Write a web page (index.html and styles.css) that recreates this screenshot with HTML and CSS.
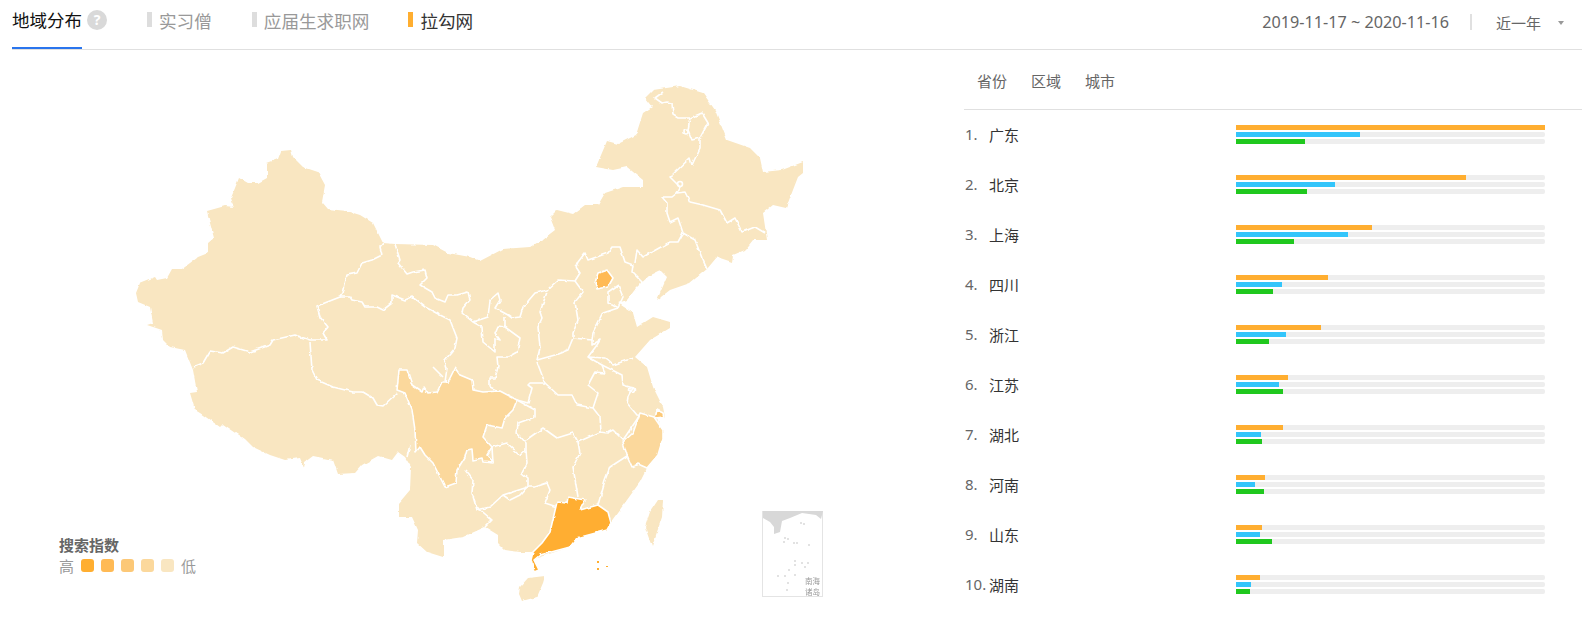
FILE: index.html
```html
<!DOCTYPE html>
<html>

<head>
  <title>地域分布</title>
  <link rel="stylesheet" href="styles.css">
</head>

<body>
  <div class="header">
    <div class="tab-active">地域分布</div>
    <div class="help">?</div>
    <div class="tab tab-1"><i class="mark"></i>实习僧</div>
    <div class="tab tab-2"><i class="mark"></i>应届生求职网</div>
    <div class="tab tab-3"><i class="mark mark-orange"></i>拉勾网</div>
    <div class="range">
      <span class="date">2019-11-17 ~ 2020-11-16</span>
      <i class="sep"></i>
      <span class="period">近一年</span>
      <i class="caret"></i>
    </div>
  </div>

  <div class="kotak">
    <div class="peta">
      <svg class="map" width="964" height="572" viewBox="0 50 964 572">
        <defs>
          <filter id="kasar" filterUnits="userSpaceOnUse" x="100" y="60" width="740" height="550">
            <feTurbulence type="fractalNoise" baseFrequency="0.14" numOctaves="2" seed="4" />
            <feDisplacementMap in="SourceGraphic" scale="3" xChannelSelector="R" yChannelSelector="G" />
          </filter>
          <filter id="kabur" filterUnits="userSpaceOnUse" x="755" y="505" width="75" height="100">
            <feGaussianBlur stdDeviation="0.45" />
          </filter>
        </defs>

        <g filter="url(#kasar)">
          <!-- daratan -->
          <path class="land" d="M136 293L140 283L155 277L157 280L167 278L172 269L182 269L198 257L208 253L208 243L214 238L210 223L207 211L225 206L234 207L231 198L239 178L248 183L258 183L267 178L267 163L278 159L281 151L291 150L293 157L303 167L318 172L325 185L322 202L328 209L347 211L360 215L373 223L383 243L395 244L433 245L448 253L470 257L480 261L503 249L530 247L542 240L555 230L550 217L557 210L573 214L585 205L598 205L605 193L623 187L643 187L643 180L627 167L613 170L596 167L607 141L618 144L636 135L643 113L652 107L645 98L653 90L680 86L703 93L715 110L727 140L750 148L760 158L763 172L782 170L803 162L803 173L798 177L786 208L773 205L763 213L767 240L753 240L745 250L733 255L732 262L717 257L707 269L690 283L670 290L657 300L667 277L660 270L650 275L637 287L627 300L618 303L633 313L637 327L653 317L670 322L670 328L650 340L635 357L647 367L653 387L663 407L665 417L657 418L663 433L658 455L647 468L640 482L627 500L610 523L607 530L577 538L570 547L540 557L533 560L538 570L533 572L531 560L533 552L520 552L505 550L498 543L498 535L485 527L463 537L443 540L443 557L427 552L417 543L418 530L412 517L399 517L399 503L410 490L411 467L405 457L398 452L392 460L378 456L362 465L355 473L338 474L333 460L313 456L305 462L304 468L300 458L285 460L270 455L253 447L245 439L223 424L220 427L200 413L195 410L190 393L197 392L193 370L185 350L170 347L163 340L162 330L147 325L153 323L150 307L138 302Z" />
          <path class="land" d="M520 587L528 578L545 576L543 583L537 597L522 601L519 594Z" />
          <path class="land" d="M663 500L658 500L650 512L645 527L652 547L662 517Z" />

          <!-- batas provinsi -->
          <path class="batas" d="M383 243L380 247L382 255L372 260L362 263L357 273L347 275L343 293L340 297L317 306L320 317L328 327L323 333L327 340L310 340L295 335L273 340L270 345L250 352L233 347L223 353L210 351L203 363L193 367" />
          <path class="batas" d="M395 244L400 260L398 263L407 274L413 272L425 270L427 278L420 285L432 292L435 298L445 302L448 295L457 295L468 292L470 300L463 308L462 313L473 322L488 317L490 300L498 293L500 300L495 308L508 315L512 318L520 317L523 307L535 293L547 290L558 280L575 281L580 273L576 267" />
          <path class="batas" d="M340 297L350 297L352 300L362 302L365 307L377 307L383 310L392 303L392 295L405 300L412 297L425 307L440 315L450 320L457 338L455 348L445 360L447 368L445 382M433 367L443 377" />
          <path class="batas" d="M310 342L312 370L317 380L333 387L353 392L363 392L373 398L377 405L383 406L397 393" />
          <path class="batas" d="M410 445L407 457M465 470L473 480L472 493L477 510L490 507L503 495L510 500L520 495L527 487M477 507L492 520L485 527" />
          <path class="batas" d="M493 463L492 447L507 443L520 455L526 450M517 400L535 410L535 417L518 423L517 433L526 443L526 450L527 463L522 473L528 478L528 487L503 495M528 487L535 487L547 483L550 490L545 503L557 507" />
          <path class="batas" d="M526 440L543 428L557 438L573 433L578 442L580 453L573 467L578 497M578 442L600 432L607 433L613 430L623 440L640 415M598 505L605 480L610 467L627 456" />
          <path class="batas" d="M473 322L482 327L483 342L495 352L495 338L500 340L495 333L498 326L505 327L520 338L517 352L508 357L497 357L498 367L495 378L490 378L490 387L513 398M505 327L505 317" />
          <path class="batas" d="M547 292L540 312L542 318L538 327L540 348L537 360L555 355L568 350L573 338L573 333L578 320L575 302L583 292L575 281M573 338L592 340L593 333L603 313L618 308" />
          <path class="batas" d="M537 362L545 383L530 383L528 385L532 388L528 403L517 400M545 383L558 395L572 395L577 405L593 408L600 417L601 432M593 408L598 393L588 385L595 372L605 373L602 365L588 357L597 345L600 340L592 345L592 340" />
          <path class="batas" d="M588 357L605 358L613 365L633 358M602 365L622 375L623 385L633 388L628 397L627 403L637 415L653 417" />
          <path class="batas" d="M618 308L608 303L608 292L618 285L623 297L618 308M576 267L578 262L585 253L588 260L608 253L612 247L620 247L625 262L633 265L632 272L642 282L635 296M635 263L637 250L643 257L670 242L678 242L683 233" />
          <path class="batas" d="M683 233L695 240L702 258L707 269M683 233L678 218L670 222L667 213L667 203L662 197L672 197L677 193L685 192L690 202L703 205L720 210L727 223L735 218L742 232L755 227L765 233" />
          <path class="batas" d="M677 193L680 187L670 177L690 158L692 165L700 148L700 138L708 123L702 113L690 118L678 118L673 115L672 103L667 102L662 103L655 98L663 92M690 118L688 130L692 140L700 138" />
          <circle class="batas" cx="680" cy="184" r="2.5" />
          <circle class="batas" cx="686" cy="132" r="2" />
          <circle class="batas" cx="632" cy="390" r="2.5" />

          <!-- provinsi berwarna -->
          <path class="prov warna-3" d="M397 390L399 370L407 370L412 385L422 392L424 387L428 393L437 392L442 382L448 382L455 368L460 375L472 380L473 390L483 392L500 391L517 400L513 410L505 418L502 428L487 425L483 437L492 447L487 455L493 463L483 462L482 458L473 460L472 449L467 450L465 457L457 470L456 483L445 487L433 463L425 455L420 447L416 452L415 430L412 410L405 393Z" />
          <path class="prov warna-3" d="M640 413L654 417L663 430L663 438L658 455L647 468L638 464L632 467L627 455L623 442L633 433Z" />
          <path class="prov warna-2" d="M657 410L663 413L664 417L655 418Z" />
          <path class="prov warna-1" d="M595 283L598 273L607 270L613 278L608 287L597 289Z" />
          <path class="prov warna-0" d="M557 502L567 503L568 497L585 500L580 510L598 505L608 512L611 523L607 530L577 538L570 547L540 555L534 560L539 570L534 572L531 560L533 552L542 543L550 532Z" />
        </g>
        <rect class="warna-0" x="597" y="561" width="2" height="2" />
        <rect class="warna-0" x="597" y="568" width="2" height="2" />
        <rect class="warna-0" x="606" y="566" width="2" height="1" />

        <!-- kotak laut china selatan -->
        <g filter="url(#kabur)">
          <rect class="inset" x="762.5" y="511.5" width="60" height="85" />
          <path class="inset-land" d="M763 511H823L821 519L816 515L802 513L790 518L782 521L780 532L774 534L774 527L770 522L763 518Z" />
          <g class="inset-dot">
            <circle cx="801" cy="523" r="1" /><circle cx="804" cy="524" r="1" />
            <circle cx="785" cy="538" r="1" /><circle cx="788" cy="539" r="1" /><circle cx="784" cy="542" r="1" />
            <circle cx="794" cy="543" r="1" /><circle cx="797" cy="543" r="1" /><circle cx="809" cy="545" r="1" />
            <circle cx="795" cy="561" r="1" /><circle cx="795" cy="565" r="1" /><circle cx="802" cy="563" r="1" />
            <circle cx="808" cy="563" r="1" /><circle cx="805" cy="567" r="1" /><circle cx="789" cy="570" r="1" />
            <circle cx="778" cy="576" r="1" /><circle cx="785" cy="576" r="1" /><circle cx="795" cy="575" r="1" />
            <circle cx="788" cy="583" r="1" /><circle cx="787" cy="590" r="1" />
          </g>
          <text class="inset-text" x="805" y="584">南海</text>
          <text class="inset-text" x="805" y="595">诸岛</text>
        </g>
      </svg>

      <div class="legend">
        <div class="legend-title">搜索指数</div>
        <div class="legend-row">
          <span>高</span>
          <i class="swatch warna-bg-0"></i>
          <i class="swatch warna-bg-1"></i>
          <i class="swatch warna-bg-2"></i>
          <i class="swatch warna-bg-3"></i>
          <i class="swatch warna-bg-4"></i>
          <span>低</span>
        </div>
      </div>
    </div>

    <div class="panel">
      <div class="subtabs">
        <span>省份</span>
        <span>区域</span>
        <span>城市</span>
      </div>

      <div class="row">
        <span class="no">1.</span><span class="nama">广东</span>
        <div class="bars">
          <div class="track"><div class="fill orange" style="width:100%"></div></div>
          <div class="track"><div class="fill blue" style="width:40%"></div></div>
          <div class="track"><div class="fill green" style="width:22.3%"></div></div>
        </div>
      </div>
      <div class="row">
        <span class="no">2.</span><span class="nama">北京</span>
        <div class="bars">
          <div class="track"><div class="fill orange" style="width:74.4%"></div></div>
          <div class="track"><div class="fill blue" style="width:32%"></div></div>
          <div class="track"><div class="fill green" style="width:23%"></div></div>
        </div>
      </div>
      <div class="row">
        <span class="no">3.</span><span class="nama">上海</span>
        <div class="bars">
          <div class="track"><div class="fill orange" style="width:44%"></div></div>
          <div class="track"><div class="fill blue" style="width:36.4%"></div></div>
          <div class="track"><div class="fill green" style="width:18.7%"></div></div>
        </div>
      </div>
      <div class="row">
        <span class="no">4.</span><span class="nama">四川</span>
        <div class="bars">
          <div class="track"><div class="fill orange" style="width:29.8%"></div></div>
          <div class="track"><div class="fill blue" style="width:14.8%"></div></div>
          <div class="track"><div class="fill green" style="width:12%"></div></div>
        </div>
      </div>
      <div class="row">
        <span class="no">5.</span><span class="nama">浙江</span>
        <div class="bars">
          <div class="track"><div class="fill orange" style="width:27.5%"></div></div>
          <div class="track"><div class="fill blue" style="width:16.2%"></div></div>
          <div class="track"><div class="fill green" style="width:10.7%"></div></div>
        </div>
      </div>
      <div class="row">
        <span class="no">6.</span><span class="nama">江苏</span>
        <div class="bars">
          <div class="track"><div class="fill orange" style="width:16.7%"></div></div>
          <div class="track"><div class="fill blue" style="width:14%"></div></div>
          <div class="track"><div class="fill green" style="width:15.2%"></div></div>
        </div>
      </div>
      <div class="row">
        <span class="no">7.</span><span class="nama">湖北</span>
        <div class="bars">
          <div class="track"><div class="fill orange" style="width:15.2%"></div></div>
          <div class="track"><div class="fill blue" style="width:8.2%"></div></div>
          <div class="track"><div class="fill green" style="width:8.4%"></div></div>
        </div>
      </div>
      <div class="row">
        <span class="no">8.</span><span class="nama">河南</span>
        <div class="bars">
          <div class="track"><div class="fill orange" style="width:9.5%"></div></div>
          <div class="track"><div class="fill blue" style="width:6.2%"></div></div>
          <div class="track"><div class="fill green" style="width:8.9%"></div></div>
        </div>
      </div>
      <div class="row">
        <span class="no">9.</span><span class="nama">山东</span>
        <div class="bars">
          <div class="track"><div class="fill orange" style="width:8.5%"></div></div>
          <div class="track"><div class="fill blue" style="width:7.9%"></div></div>
          <div class="track"><div class="fill green" style="width:11.5%"></div></div>
        </div>
      </div>
      <div class="row">
        <span class="no">10.</span><span class="nama">湖南</span>
        <div class="bars">
          <div class="track"><div class="fill orange" style="width:7.9%"></div></div>
          <div class="track"><div class="fill blue" style="width:4.9%"></div></div>
          <div class="track"><div class="fill green" style="width:4.6%"></div></div>
        </div>
      </div>
    </div>
  </div>
</body>

</html>
```
FILE: styles.css
```css
* {
  margin: 0;
  padding: 0;
  box-sizing: border-box;
}

html,
body {
  height: 622px;
  overflow: hidden;
}

body {
  font-family: "Noto Sans", "Noto Sans CJK SC", sans-serif;
  background-color: #fff;
  color: #333;
}

i {
  display: block;
}

.header {
  display: flex;
  align-items: center;
  height: 50px;
  width: 1570px;
  margin-left: 12px;
  border-bottom: 1px solid #e0e0e0;
}

.tab-active {
  width: 70px;
  height: 49px;
  line-height: 40px;
  font-size: 17.5px;
  color: #111;
  white-space: nowrap;
  border-bottom: 2px solid #2a75ed;
}

.help {
  width: 20px;
  height: 20px;
  margin: -10px 0 0 5px;
  border-radius: 50%;
  background-color: #d9d9d9;
  color: #fff;
  font-size: 14px;
  font-weight: bold;
  line-height: 20px;
  text-align: center;
}

.tab {
  display: flex;
  align-items: flex-start;
  height: 49px;
  padding-top: 8px;
  font-size: 17.6px;
  line-height: 27px;
  color: #999;
  white-space: nowrap;
}

.tab-1 {
  margin-left: 40px;
}

.tab-2 {
  margin-left: 40px;
}

.tab-3 {
  margin-left: 39px;
  color: #333;
}

.mark {
  width: 5px;
  height: 15px;
  margin: 4px 7px 0 0;
  background-color: #ddd;
}

.mark-orange {
  background-color: #ffae30;
}

.range {
  display: flex;
  align-items: center;
  margin-left: auto;
  height: 49px;
  padding-bottom: 5px;
  color: #666;
}

.date {
  font-size: 16.2px;
}

.sep {
  width: 2px;
  height: 16px;
  margin: 0 24px 0 21px;
  background-color: #e0e0e0;
}

.period {
  font-size: 15px;
}

.caret {
  width: 0;
  height: 0;
  margin: 2px 18px 0 17px;
  border-left: 3px solid transparent;
  border-right: 3px solid transparent;
  border-top: 4px solid #999;
}

.kotak {
  display: flex;
}

.peta {
  position: relative;
  width: 964px;
}

.map {
  display: block;
}

.land {
  fill: #f9e6c1;
}

.batas {
  fill: none;
  stroke: #fff;
  stroke-width: 1.6;
  stroke-linejoin: round;
}

.prov {
  stroke: #fff;
  stroke-width: 1.6;
  stroke-linejoin: round;
}

.warna-0 {
  fill: #ffae30;
}

.warna-1 {
  fill: #ffba55;
}

.warna-2 {
  fill: #fcc877;
}

.warna-3 {
  fill: #fbd89c;
}

.warna-bg-0 {
  background-color: #ffae30;
}

.warna-bg-1 {
  background-color: #ffba55;
}

.warna-bg-2 {
  background-color: #fcc877;
}

.warna-bg-3 {
  background-color: #fbd89c;
}

.warna-bg-4 {
  background-color: #f9e6c1;
}

.inset {
  fill: #fff;
  stroke: #e4e4e4;
}

.inset-land {
  fill: #d8d8d8;
}

.inset-dot {
  fill: #d8d8d8;
}

.inset-text {
  font-size: 7.5px;
  fill: #999;
}

.legend {
  position: absolute;
  left: 59px;
  top: 485px;
}

.legend-title {
  font-size: 15px;
  font-weight: bold;
  line-height: 20px;
  color: #666;
}

.legend-row {
  display: flex;
  align-items: center;
  gap: 7px;
  height: 20px;
  font-size: 15px;
  color: #999;
}

.swatch {
  width: 13px;
  height: 13px;
  border-radius: 3px;
}

.panel {
  width: 618px;
}

.subtabs {
  display: flex;
  gap: 24px;
  height: 60px;
  padding: 0 0 0 13px;
  align-items: center;
  font-size: 15px;
  color: #666;
  border-bottom: 1px solid #e0e0e0;
}

.subtabs span {
  margin-top: 1px;
}

.row {
  display: flex;
  align-items: center;
  height: 50px;
  font-size: 15px;
}

.no {
  width: 25px;
  padding-left: 1px;
  margin-top: -2px;
  color: #666;
}

.nama {
  width: 247px;
  margin-top: -2px;
  color: #333;
}

.bars {
  display: flex;
  flex-direction: column;
  gap: 2px;
  width: 309px;
  margin-top: -1px;
}

.track {
  height: 5px;
  border-radius: 2px;
  background-color: #eee;
}

.fill {
  height: 5px;
}

.orange {
  background-color: #ffae30;
}

.blue {
  background-color: #33c5fb;
}

.green {
  background-color: #20c81e;
}
```
